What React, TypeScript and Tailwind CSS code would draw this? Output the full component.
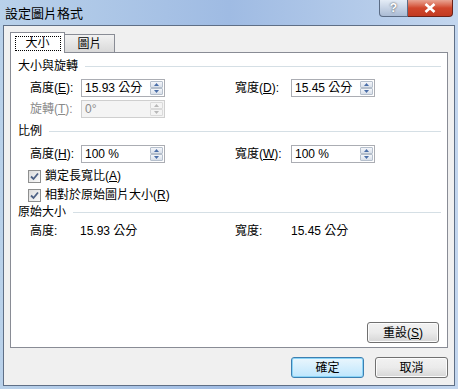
import React from "react";

const font = { fontFamily: '"Liberation Sans", "Noto Sans CJK TC", sans-serif' };

function Spin({ disabled }: { disabled?: boolean }) {
  const arrow = disabled ? "#b8b8b8" : "#4a6ea8";
  const bg = disabled
    ? "bg-[#f4f4f4] border-[#dadada]"
    : "bg-gradient-to-b from-[#f4f6fa] to-[#d9e0ea] border-[#b5bfcc]";
  return (
    <div className="flex flex-col h-full w-[14px] py-[1px] pr-[1px]">
      <div className={`flex-1 border rounded-[1px] flex items-center justify-center ${bg}`}>
        <svg width="5" height="3" viewBox="0 0 5 3">
          <path d="M0 3 L2.5 0 L5 3 Z" fill={arrow} />
        </svg>
      </div>
      <div className={`flex-1 border rounded-[1px] flex items-center justify-center ${bg}`}>
        <svg width="5" height="3" viewBox="0 0 5 3">
          <path d="M0 0 L2.5 3 L5 0 Z" fill={arrow} />
        </svg>
      </div>
    </div>
  );
}

function Input({ value, disabled }: { value: string; disabled?: boolean }) {
  return (
    <div
      className={`w-[84px] h-[18px] border flex items-center ${
        disabled ? "border-[#cfcfcf] bg-[#f4f4f4] text-[#8a8a8a]" : "border-[#abadb3] bg-white text-black"
      }`}
    >
      <span className="flex-1 pl-[3px] leading-none whitespace-nowrap">{value}</span>
      <Spin disabled={disabled} />
    </div>
  );
}

function Mn({ label, k, gray }: { label: string; k: string; gray?: boolean }) {
  return (
    <span className={`whitespace-nowrap ${gray ? "text-[#8a8a8a]" : ""}`}>
      {label}(<span className="underline">{k}</span>):
    </span>
  );
}

function Header({ text }: { text: string }) {
  return (
    <div className="flex items-center h-[14px] pr-[6px]">
      <span className="whitespace-nowrap">{text}</span>
      <div className="flex-1 h-px bg-[#d5dfe5] ml-[7px]" />
    </div>
  );
}

function Check({ children }: { children: React.ReactNode }) {
  return (
    <div className="flex items-center h-[14px] pl-[10px] gap-[4px]">
      <div className="w-[13px] h-[13px] border border-[#8e8f8f] bg-gradient-to-br from-[#dcdcdc] to-[#fafafa] flex items-center justify-center">
        <svg width="9" height="9" viewBox="0 0 9 9">
          <path d="M1 4.5 L3.5 7 L8 1.5" stroke="#4d6185" strokeWidth="1.8" fill="none" />
        </svg>
      </div>
      <span className="whitespace-nowrap">{children}</span>
    </div>
  );
}

function Button({ children, focus, w = "w-[73px]" }: { children: React.ReactNode; focus?: boolean; w?: string }) {
  return (
    <div
      className={`${w} h-[21px] rounded-[3px] border flex items-center justify-center ${
        focus
          ? "border-[#3c7fb1] bg-gradient-to-b from-[#eaf6fd] to-[#bee6fd] shadow-[inset_0_0_0_1px_#8ad4f7]"
          : "border-[#707070] bg-gradient-to-b from-[#f2f2f2] via-[#ebebeb] to-[#d6d6d6] shadow-[inset_0_0_0_1px_#fcfcfc]"
      }`}
    >
      {children}
    </div>
  );
}

export default function App() {
  return (
    <div
      className="w-[458px] h-[389px] text-[12px] text-black flex flex-col bg-gradient-to-r from-[#b9d1ea] via-[#9fbbe3] to-[#c3d6ee]"
      style={font}
    >
      {/* title bar */}
      <div className="h-[25px] flex items-start justify-between pl-[5px] pr-[5px]">
        <span className="text-[13px] mt-[4px]">設定圖片格式</span>
        <div className="flex">
          <div className="w-[29px] h-[17px] rounded-bl-[4px] border border-t-0 border-[#5b6c85] bg-gradient-to-b from-[#e4ecf6] to-[#aabbd4] flex items-center justify-center text-white font-bold text-[12px] [text-shadow:0_0_2px_#333]">
            ?
          </div>
          <div className="w-[45px] h-[17px] rounded-br-[4px] border border-t-0 border-l-0 border-[#6b2118] bg-gradient-to-b from-[#e8a493] via-[#d0462c] to-[#c23a22] flex items-center justify-center">
            <svg width="12" height="10" viewBox="0 0 12 10">
              <path d="M1.5 1 L10.5 9 M10.5 1 L1.5 9" stroke="#ffffff" strokeWidth="2.6" />
            </svg>
          </div>
        </div>
      </div>

      {/* client */}
      <div className="flex-1 mx-[3px] mb-[3px] border border-[#5f6f86] bg-[#f0f0f0] flex flex-col pl-[6px] pr-[6px]">
        {/* tabs */}
        <div className="flex items-end h-[20px] mt-[6px]">
          <div className="w-[55px] h-[21px] border border-b-0 border-[#898c95] bg-white relative z-10 mb-[-1px] flex items-center justify-center">
            <div className="w-[46px] h-[15px] border border-dotted border-black flex items-center justify-center">
              大小
            </div>
          </div>
          <div className="w-[50px] h-[18px] border border-b-0 border-l-0 border-[#898c95] bg-gradient-to-b from-[#f2f2f2] to-[#d9d9d9] flex items-center justify-center">
            圖片
          </div>
        </div>

        {/* panel */}
        <div className="h-[296px] border border-[#898c95] bg-white flex flex-col pl-[7px] pt-[6px]">
          <Header text="大小與旋轉" />
          <div className="flex items-center mt-[6px] pl-[12px]">
            <div className="w-[51px]"><Mn label="高度" k="E" /></div>
            <Input value="15.93 公分" />
            <div className="w-[70px]" />
            <div className="w-[56px]"><Mn label="寬度" k="D" /></div>
            <Input value="15.45 公分" />
          </div>
          <div className="flex items-center mt-[3px] pl-[12px]">
            <div className="w-[51px]"><Mn label="旋轉" k="T" gray /></div>
            <Input value="0°" disabled />
          </div>

          <div className="mt-[6px]">
            <Header text="比例" />
          </div>
          <div className="flex items-center mt-[7px] pl-[12px]">
            <div className="w-[51px]"><Mn label="高度" k="H" /></div>
            <Input value="100 %" />
            <div className="w-[70px]" />
            <div className="w-[56px]"><Mn label="寬度" k="W" /></div>
            <Input value="100 %" />
          </div>
          <div className="mt-[6px]">
            <Check>
              鎖定長寬比(<span className="underline">A</span>)
            </Check>
          </div>
          <div className="mt-[5px]">
            <Check>
              相對於原始圖片大小(<span className="underline">R</span>)
            </Check>
          </div>

          <div className="mt-[3px]">
            <Header text="原始大小" />
          </div>
          <div className="flex items-center h-[14px] mt-[5px] pl-[12px]">
            <span className="w-[50px]">高度:</span>
            <span className="w-[155px] whitespace-nowrap">15.93 公分</span>
            <span className="w-[56px]">寬度:</span>
            <span className="whitespace-nowrap">15.45 公分</span>
          </div>

          <div className="flex-1 flex items-end justify-end pr-[8px] pb-[4px]">
            <Button w="w-[72px]">
              重設(<span className="underline">S</span>)
            </Button>
          </div>
        </div>

        {/* footer */}
        <div className="flex justify-end gap-[11px] mt-[9px]">
          <Button focus>確定</Button>
          <Button>取消</Button>
        </div>
      </div>
    </div>
  );
}
